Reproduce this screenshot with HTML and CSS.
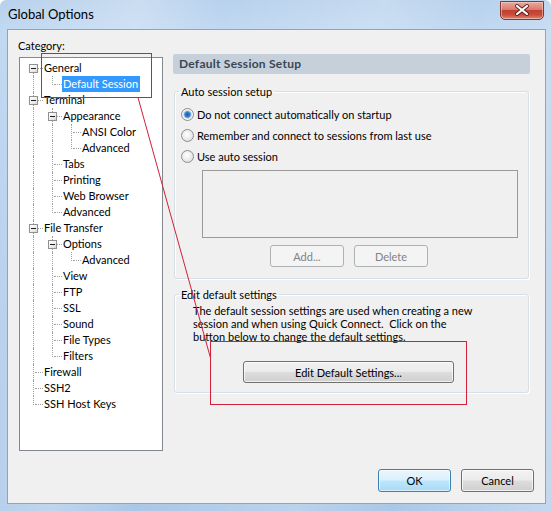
FILE: index.html
```html
<!DOCTYPE html>
<html>
<head>
<meta charset="utf-8">
<title>Global Options</title>
<link rel="stylesheet" href="styles.css">
</head>
<body>
<div class="window">
  <div class="titlebar">
    <span class="title">Global Options</span>
    <div class="close">
      <svg width="44" height="19" viewBox="0 0 44 19">
        <path d="M17 5 L27 13 M27 5 L17 13" stroke="#5b1f1f" stroke-width="4" stroke-linecap="round" fill="none"/>
        <path d="M17 5 L27 13 M27 5 L17 13" stroke="#ffffff" stroke-width="2.2" stroke-linecap="round" fill="none"/>
      </svg>
    </div>
  </div>
  <div class="client">
    <div class="main">
      <div class="left">
        <div class="cat-label">Category:</div>
        <div class="tree">
          <div class="row"><span class="c first"><span class="box"></span></span><span class="lbl">General</span></div>
          <div class="row"><span class="c pipe"></span><span class="c elbow"></span><span class="lbl sel">Default Session</span></div>
          <div class="row"><span class="c tee"><span class="box"></span></span><span class="lbl">Terminal</span></div>
          <div class="row"><span class="c pipe"></span><span class="c tee"><span class="box"></span></span><span class="lbl">Appearance</span></div>
          <div class="row"><span class="c pipe"></span><span class="c pipe"></span><span class="c tee"></span><span class="lbl">ANSI Color</span></div>
          <div class="row"><span class="c pipe"></span><span class="c pipe"></span><span class="c elbow"></span><span class="lbl">Advanced</span></div>
          <div class="row"><span class="c pipe"></span><span class="c tee"></span><span class="lbl">Tabs</span></div>
          <div class="row"><span class="c pipe"></span><span class="c tee"></span><span class="lbl">Printing</span></div>
          <div class="row"><span class="c pipe"></span><span class="c tee"></span><span class="lbl">Web Browser</span></div>
          <div class="row"><span class="c pipe"></span><span class="c elbow"></span><span class="lbl">Advanced</span></div>
          <div class="row"><span class="c tee"><span class="box"></span></span><span class="lbl">File Transfer</span></div>
          <div class="row"><span class="c pipe"></span><span class="c tee"><span class="box"></span></span><span class="lbl">Options</span></div>
          <div class="row"><span class="c pipe"></span><span class="c pipe"></span><span class="c elbow"></span><span class="lbl">Advanced</span></div>
          <div class="row"><span class="c pipe"></span><span class="c tee"></span><span class="lbl">View</span></div>
          <div class="row"><span class="c pipe"></span><span class="c tee"></span><span class="lbl">FTP</span></div>
          <div class="row"><span class="c pipe"></span><span class="c tee"></span><span class="lbl">SSL</span></div>
          <div class="row"><span class="c pipe"></span><span class="c tee"></span><span class="lbl">Sound</span></div>
          <div class="row"><span class="c pipe"></span><span class="c tee"></span><span class="lbl">File Types</span></div>
          <div class="row"><span class="c pipe"></span><span class="c elbow"></span><span class="lbl">Filters</span></div>
          <div class="row"><span class="c tee"></span><span class="lbl">Firewall</span></div>
          <div class="row"><span class="c tee"></span><span class="lbl">SSH2</span></div>
          <div class="row"><span class="c elbow"></span><span class="lbl">SSH Host Keys</span></div>
        </div>
      </div>
      <div class="right">
        <div class="header">Default Session Setup</div>
        <fieldset class="group g1">
          <legend>Auto session setup</legend>
          <div class="radios">
            <div class="radio-row"><span class="radio checked"></span><span>Do not connect automatically on startup</span></div>
            <div class="radio-row"><span class="radio"></span><span>Remember and connect to sessions from last use</span></div>
            <div class="radio-row"><span class="radio"></span><span>Use auto session</span></div>
          </div>
          <div class="listbox"></div>
          <div class="btn-row">
            <button class="btn disabled small">Add...</button>
            <button class="btn disabled small">Delete</button>
          </div>
        </fieldset>
        <fieldset class="group g2">
          <legend>Edit default settings</legend>
          <p class="desc">The default session settings are used when creating a new<br>session and when using Quick Connect.&nbsp; Click on the<br>button below to change the default settings.</p>
          <button class="btn edit">Edit Default Settings...</button>
        </fieldset>
      </div>
    </div>
    <div class="footer">
      <button class="btn default dlg">OK</button>
      <button class="btn dlg">Cancel</button>
    </div>
  </div>
  <div class="mark mark-tree"></div>
  <div class="mark mark-button"></div>
  <svg class="annot" width="551" height="511" viewBox="0 0 551 511">
    <line x1="138" y1="97.5" x2="210.5" y2="358" stroke="#d0203a" stroke-width="1"/>
  </svg>
</div>
</body>
</html>
```

FILE: styles.css
```css
* { box-sizing: border-box; }
html, body { margin: 0; padding: 0; }
body {
  width: 551px;
  height: 511px;
  overflow: hidden;
  background: #ffffff;
  font-family: Lato, "Noto Sans", sans-serif;
  font-size: 11px;
  color: #000;
}
.window {
  position: relative;
  width: 551px;
  height: 511px;
  display: flex;
  flex-direction: column;
  border-radius: 6px 6px 0 0;
  background:
    linear-gradient(100deg, rgba(255,255,255,0) 0%, rgba(255,255,255,0.25) 22%, rgba(255,255,255,0) 35%, rgba(255,255,255,0.2) 60%, rgba(255,255,255,0) 75%, rgba(255,255,255,0.3) 100%),
    linear-gradient(180deg, #b8d1ec 0%, #c0d8f1 6%, #b3cdea 60%, #abc7e7 100%);
}
.titlebar {
  height: 29px;
  flex: none;
  display: flex;
  justify-content: space-between;
  align-items: flex-start;
  padding-left: 8px;
}
.title {
  font-size: 13px;
  line-height: 29px;
  color: #000;
}
.close {
  width: 44px;
  height: 19px;
  margin: 1px 7px 0 0;
  border: 1px solid #7b3a35;
  border-radius: 0 0 5px 5px;
  background: linear-gradient(180deg, #e8ab9d 0%, #d97a6d 45%, #c2402f 50%, #c84b3a 75%, #d98a78 100%);
  box-shadow: inset 0 0 0 1px rgba(255,220,210,0.5);
}
.close svg { display: block; margin: -1px 0 0 -1px; }

.client {
  flex: 1;
  margin: 0 5px 7px 7px;
  border: 1px solid #8ea4be;
  background: #f0f0f0;
  display: flex;
  flex-direction: column;
}
.main {
  flex: 1;
  display: flex;
  padding-top: 8px;
}
.left {
  width: 155px;
  flex: none;
  padding-left: 10px;
}
.cat-label {
  line-height: 15px;
  height: 15px;
  margin-bottom: 4px;
}
.tree {
  width: 144px;
  height: 394px;
  margin-left: 1px;
  border: 1px solid #828790;
  background: #ffffff;
  padding: 2px 0 0 4px;
}
.row {
  display: flex;
  height: 16px;
  line-height: 16px;
  white-space: nowrap;
}
.c {
  position: relative;
  flex: none;
  width: 19px;
  height: 16px;
}
.c.pipe::before,
.c.tee::before {
  content: "";
  position: absolute;
  left: 9px;
  top: 0;
  height: 16px;
  border-left: 1px dotted #a0a0a0;
}
.c.elbow::before {
  content: "";
  position: absolute;
  left: 9px;
  top: 0;
  height: 9px;
  border-left: 1px dotted #a0a0a0;
}
.c.first::before {
  content: "";
  position: absolute;
  left: 9px;
  top: 8px;
  height: 8px;
  border-left: 1px dotted #a0a0a0;
}
.c.tee::after,
.c.elbow::after,
.c.first::after {
  content: "";
  position: absolute;
  left: 11px;
  right: 0;
  top: 8px;
  border-top: 1px dotted #a0a0a0;
}
.box {
  position: absolute;
  z-index: 1;
  left: 5px;
  top: 4px;
  width: 9px;
  height: 9px;
  border: 1px solid #919191;
  background: linear-gradient(135deg, #ffffff 0%, #f0f0f0 50%, #d8d8d8 100%);
}
.box::after {
  content: "";
  position: absolute;
  left: 1px;
  top: 3px;
  width: 5px;
  height: 1px;
  background: #1e1e1e;
}
.lbl {
  padding: 0 2px 0 1px;
  color: #000;
}
.lbl.sel {
  background: #3399ff;
  color: #ffffff;
}

.right {
  width: 357px;
  flex: none;
  margin-left: 10px;
  margin-top: 16px;
}
.header {
  height: 20px;
  line-height: 20px;
  padding-left: 6px;
  background: #c6d0da;
  border-radius: 2px;
  font-size: 12px;
  font-weight: bold;
  letter-spacing: 0.25px;
  color: #3a4652;
}
.group {
  margin: 10px 1px 0 1px;
  padding: 0 0 0 6px;
  min-width: 0;
  border: 1px solid #d5dfe5;
  border-radius: 3px;
  box-shadow: inset 1px 1px 0 #ffffff, 1px 1px 0 #ffffff;
}
.group legend {
  padding: 0 2px;
  margin-left: -2px;
  line-height: 15px;
}
.radios {
  margin-top: 5px;
}
.radio-row {
  display: flex;
  align-items: center;
  height: 21px;
}
.radio {
  width: 13px;
  height: 13px;
  flex: none;
  margin-right: 3px;
  border-radius: 50%;
  border: 1px solid #8e8f8f;
  background: radial-gradient(circle at 45% 40%, #ffffff 0%, #f0f0f0 40%, #d4d4d4 100%);
}
.radio.checked {
  background: radial-gradient(circle at 50% 50%, #1d5fb0 0px, #2a74c8 2px, #6ea8e4 3.2px, #e6e6e6 4.2px, #f4f4f4 5px, #d8d8d8 100%);
}
.listbox {
  width: 316px;
  height: 68px;
  margin: 3px 0 0 21px;
  border: 1px solid #9a9a9a;
  background: #f0f0f0;
}
.btn-row {
  display: flex;
  gap: 10px;
  margin: 7px 0 11px 89px;
}
.btn {
  font-family: inherit;
  font-size: 11px;
  color: #000;
  height: 22px;
  padding: 0;
  border: 1px solid #707070;
  border-radius: 3px;
  background: linear-gradient(180deg, #f2f2f2 0%, #ebebeb 48%, #dddddd 52%, #cfcfcf 100%);
  box-shadow: inset 0 0 0 1px rgba(255,255,255,0.7);
}
.btn.small { width: 74px; }
.btn.disabled {
  border-color: #adb2b5;
  background: #f4f4f4;
  color: #838383;
  box-shadow: none;
}
.g2 { margin-top: 8px; }
.desc {
  margin: 2px 0 0 12px;
  line-height: 13px;
}
.btn.edit {
  display: block;
  width: 211px;
  margin: 18px 0 9px 62px;
}
.footer {
  flex: none;
  display: flex;
  justify-content: flex-end;
  gap: 10px;
  padding: 0 11px 11px 0;
}
.btn.dlg {
  width: 73px;
  height: 23px;
}
.btn.default {
  border-color: #3c7fb1;
  background: linear-gradient(180deg, #eaf6fd 0%, #d9f0fc 48%, #bee6fd 52%, #a7d9f5 100%);
  box-shadow: inset 0 0 0 1px rgba(255,255,255,0.6);
}
.mark {
  position: absolute;
  border: 1px solid #d0203a;
  pointer-events: none;
}
.mark-tree {
  left: 41px;
  top: 53px;
  width: 111px;
  height: 45px;
}
.mark-button {
  left: 210px;
  top: 341px;
  width: 257px;
  height: 64px;
}
.annot {
  position: absolute;
  left: 0;
  top: 0;
  pointer-events: none;
}
```
